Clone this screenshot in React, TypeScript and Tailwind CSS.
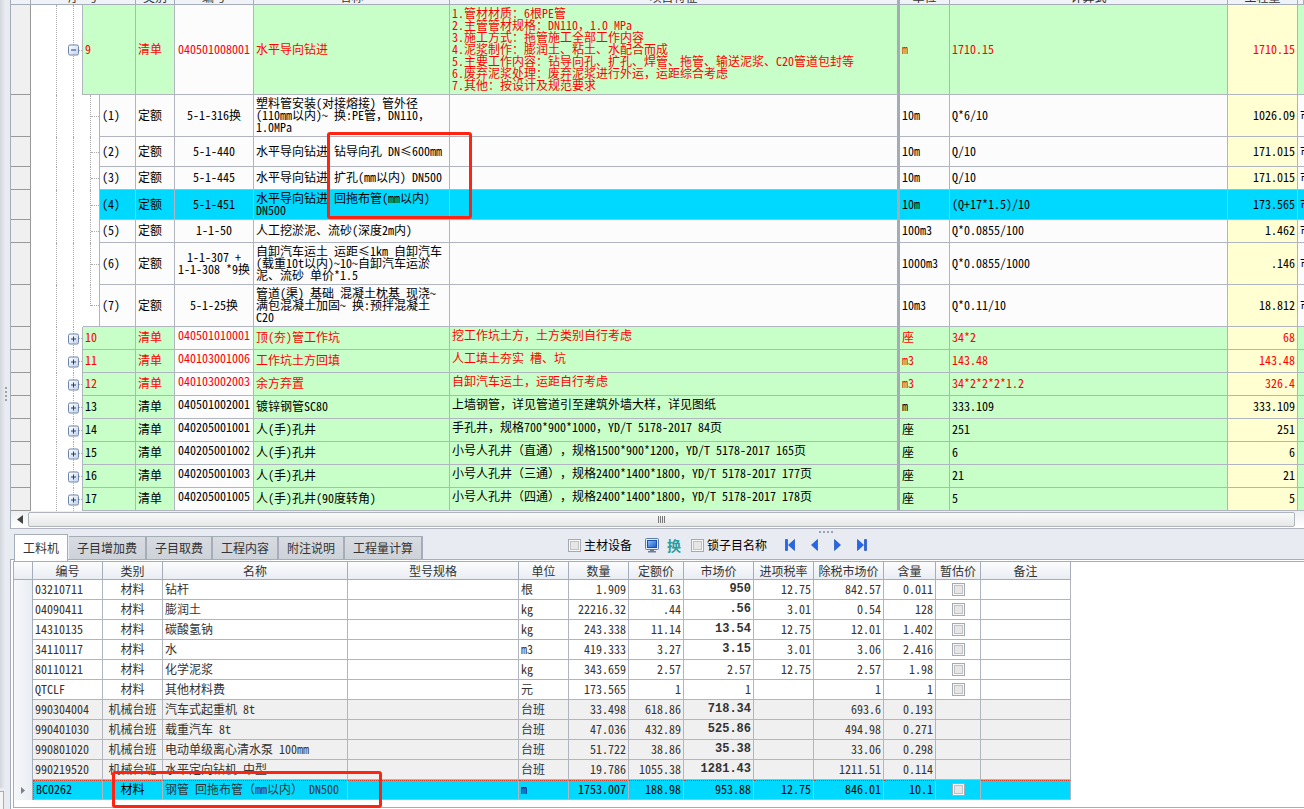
type Kind = "bill" | "quota";

type Item = {
  kind: Kind;
  seq: string;
  code: string;
  name: string;
  feature?: string;
  unit: string;
  formula: string;
  amount: string;
  height: string;
  red?: boolean;
  open?: boolean;
  selected?: boolean;
  last?: boolean;
};

const items: Item[] = [
  {
    kind: "bill",
    seq: "9",
    code: "040501008001",
    name: "水平导向钻进",
    feature:
      "1.管材材质：6根PE管\n2.主管管材规格：DN110，1.0 MPa\n3.施工方式：拖管施工全部工作内容\n4.泥浆制作：膨润土、粘土、水配合而成\n5.主要工作内容：钻导向孔、扩孔、焊管、拖管、输送泥浆、C20管道包封等\n6.废弃泥浆处理：废弃泥浆进行外运，运距综合考虑\n7.其他：按设计及规范要求",
    unit: "m",
    formula: "1710.15",
    amount: "1710.15",
    height: "h-[90px]",
    red: true,
    open: true,
  },
  { kind: "quota", seq: "(1)", code: "5-1-316换", name: "塑料管安装(对接熔接) 管外径\n(110mm以内)~ 换:PE管，DN110，\n1.0MPa", unit: "10m", formula: "Q*6/10", amount: "1026.09", height: "h-[42px]" },
  { kind: "quota", seq: "(2)", code: "5-1-440", name: "水平导向钻进 钻导向孔 DN≤600mm", unit: "10m", formula: "Q/10", amount: "171.015", height: "h-[30px]" },
  { kind: "quota", seq: "(3)", code: "5-1-445", name: "水平导向钻进 扩孔(mm以内) DN500", unit: "10m", formula: "Q/10", amount: "171.015", height: "h-[23px]" },
  { kind: "quota", seq: "(4)", code: "5-1-451", name: "水平导向钻进 回拖布管(mm以内)\nDN500", unit: "10m", formula: "(Q+17*1.5)/10", amount: "173.565", height: "h-[30px]", selected: true },
  { kind: "quota", seq: "(5)", code: "1-1-50", name: "人工挖淤泥、流砂(深度2m内)", unit: "100m3", formula: "Q*0.0855/100", amount: "1.462", height: "h-[23px]" },
  { kind: "quota", seq: "(6)", code: "1-1-307 +\n1-1-308 *9换", name: "自卸汽车运土 运距≤1km 自卸汽车\n(载重10t以内)~10~自卸汽车运淤\n泥、流砂 单价*1.5", unit: "1000m3", formula: "Q*0.0855/1000", amount: ".146", height: "h-[42px]" },
  { kind: "quota", seq: "(7)", code: "5-1-25换", name: "管道(渠) 基础 混凝土枕基 现浇~\n满包混凝土加固~ 换:预拌混凝土\nC20", unit: "10m3", formula: "Q*0.11/10", amount: "18.812", height: "h-[42px]", last: true },
  { kind: "bill", seq: "10", code: "040501010001", name: "顶(夯)管工作坑", feature: "挖工作坑土方，土方类别自行考虑", unit: "座", formula: "34*2", amount: "68", height: "h-[23px]", red: true },
  { kind: "bill", seq: "11", code: "040103001006", name: "工作坑土方回填", feature: "人工填土夯实 槽、坑", unit: "m3", formula: "143.48", amount: "143.48", height: "h-[23px]", red: true },
  { kind: "bill", seq: "12", code: "040103002003", name: "余方弃置", feature: "自卸汽车运土，运距自行考虑", unit: "m3", formula: "34*2*2*2*1.2", amount: "326.4", height: "h-[23px]", red: true },
  { kind: "bill", seq: "13", code: "040501002001", name: "镀锌钢管SC80", feature: "上墙钢管，详见管道引至建筑外墙大样，详见图纸", unit: "m", formula: "333.109", amount: "333.109", height: "h-[23px]" },
  { kind: "bill", seq: "14", code: "040205001001", name: "人(手)孔井", feature: "手孔井，规格700*900*1000，YD/T 5178-2017 84页", unit: "座", formula: "251", amount: "251", height: "h-[23px]" },
  { kind: "bill", seq: "15", code: "040205001002", name: "人(手)孔井", feature: "小号人孔井（直通），规格1500*900*1200，YD/T 5178-2017 165页", unit: "座", formula: "6", amount: "6", height: "h-[23px]" },
  { kind: "bill", seq: "16", code: "040205001003", name: "人(手)孔井", feature: "小号人孔井（三通），规格2400*1400*1800，YD/T 5178-2017 177页", unit: "座", formula: "21", amount: "21", height: "h-[23px]" },
  { kind: "bill", seq: "17", code: "040205001005", name: "人(手)孔井(90度转角)", feature: "小号人孔井（四通），规格2400*1400*1800，YD/T 5178-2017 178页", unit: "座", formula: "5", amount: "5", height: "h-[23px]" },
];

// code, category, name, unit, quantity, quota price, market price, tax rate, net price, content
const materials = [
  ["03210711", "材料", "钻杆", "根", "1.909", "31.63", "950", "12.75", "842.57", "0.011"],
  ["04090411", "材料", "膨润土", "kg", "22216.32", ".44", ".56", "3.01", "0.54", "128"],
  ["14310135", "材料", "碳酸氢钠", "kg", "243.338", "11.14", "13.54", "12.75", "12.01", "1.402"],
  ["34110117", "材料", "水", "m3", "419.333", "3.27", "3.15", "3.01", "3.06", "2.416"],
  ["80110121", "材料", "化学泥浆", "kg", "343.659", "2.57", "2.57", "12.75", "2.57", "1.98"],
  ["QTCLF", "材料", "其他材料费", "元", "173.565", "1", "1", "", "1", "1"],
  ["990304004", "机械台班", "汽车式起重机 8t", "台班", "33.498", "618.86", "718.34", "", "693.6", "0.193"],
  ["990401030", "机械台班", "载重汽车 8t", "台班", "47.036", "432.89", "525.86", "", "494.98", "0.271"],
  ["990801020", "机械台班", "电动单级离心清水泵 100mm", "台班", "51.722", "38.86", "35.38", "", "33.06", "0.298"],
  ["990219520", "机械台班", "水平定向钻机 中型", "台班", "19.786", "1055.38", "1281.43", "", "1211.51", "0.114"],
  ["BC0262", "材料", "钢管 回拖布管（mm以内） DN500", "m", "1753.007", "188.98", "953.88", "12.75", "846.01", "10.1"],
];

const materialColumns = [
  ["编号", "w-[70px]"],
  ["类别", "w-[60px]"],
  ["名称", "w-[185px]"],
  ["型号规格", "w-[171px]"],
  ["单位", "w-[50px]"],
  ["数量", "w-[60px]"],
  ["定额价", "w-[55px]"],
  ["市场价", "w-[70px]"],
  ["进项税率", "w-[60px]"],
  ["除税市场价", "w-[70px]"],
  ["含量", "w-[52px]"],
  ["暂估价", "w-[45px]"],
  ["备注", "w-[90px]"],
];

const tabs = ["工料机", "子目增加费", "子目取费", "工程内容", "附注说明", "工程量计算"];

const tick =
  "block size-[13px] shrink-0 appearance-none border border-[#a3aab6] bg-[#e6e6e6] shadow-[inset_0_0_0_1px_#f6f6f6,inset_0_0_0_2px_#c2c2c2]";

function Expander({ open }: { open?: boolean }) {
  return (
    <button
      type="button"
      aria-label={open ? "收起" : "展开"}
      className="absolute top-1/2 left-[-6px] size-[11px] -translate-y-1/2 rounded-[2px] border border-[#6b84a8] bg-linear-to-br from-white to-[#c3d3ee]"
    >
      <svg viewBox="0 0 9 9" className="block size-[9px]" stroke="#24406e" strokeWidth="1">
        <path d="M2 4.5h5" />
        {!open && <path d="M4.5 2v5" />}
      </svg>
    </button>
  );
}

function ItemRow({ item }: { item: Item }) {
  const bill = item.kind === "bill";
  const bg = item.selected ? "bg-[#00d9ff]" : bill ? "bg-[#c8ffc8]" : "bg-[#fcfcfc]";
  const plain = item.selected ? "bg-[#00d9ff]" : "bg-[#fcfcfc]";
  const cell = `border-r border-b border-[#b0b5c0] px-0.5 pb-0.5 ${bg}`;
  return (
    <tr className={`${item.height} ${item.red ? "text-[#ff0000]" : "text-black"}`}>
      <td className="border-r border-b border-[#999] bg-[#f0f0f0]" />
      <td className="border-r border-dotted border-[#aaa]" />
      <td className="border-r border-dotted border-[#aaa]" />
      {bill ? (
        <>
          <td className="relative border-r border-[#b0b5c0]">
            <div className="ml-1 border-t border-dotted border-[#aaa]" />
            <Expander open={item.open} />
          </td>
          <td colSpan={3} className={cell}>{item.seq}</td>
        </>
      ) : (
        <>
          <td />
          {item.last ? (
            <td className="border-b border-[#b0b5c0] align-top">
              <div className="h-[21px] border-r border-dotted border-[#aaa]" />
            </td>
          ) : (
            <td className="border-r border-dotted border-[#aaa]" />
          )}
          <td className={`border-r border-[#b0b5c0] ${item.last ? "border-b" : ""}`}>
            <div className="border-t border-dotted border-[#aaa]" />
          </td>
          <td className={cell}>{item.seq}</td>
        </>
      )}
      <td className={cell}>{bill ? "清单" : "定额"}</td>
      <td
        className={`border-r border-b border-[#b0b5c0] text-center ${plain} ${bill && !item.open ? "pt-0.5 align-top" : "pb-0.5"}`}
      >
        {item.code}
      </td>
      <td className={cell}>{item.name}</td>
      <td className={`border-r-[3px] border-b border-r-[#a3abb5] border-b-[#b0b5c0] px-0.5 ${bg} ${item.open ? "pb-0.5" : "pt-0.5 align-top"}`}>
        {item.feature}
      </td>
      <td className={cell}>{item.unit}</td>
      <td className={cell}>{item.formula}</td>
      <td className={`border-r border-b border-[#b0b5c0] px-0.5 pb-0.5 text-right ${item.selected ? "bg-[#00d9ff]" : "bg-[#ffffd2]"}`}>
        {item.amount}
      </td>
      <td className={`overflow-hidden border-b border-[#b0b5c0] pb-0.5 pl-0.5 ${bg}`}>{bill ? "" : "市"}</td>
    </tr>
  );
}

function HeadCell({ label, span, thick }: { label: string; span?: number; thick?: boolean }) {
  return (
    <th
      colSpan={span}
      className={`border-b border-[#a5adb8] bg-[#eff2f6] p-0 font-normal text-[#333] ${thick ? "border-r-[3px]" : "border-r"}`}
    >
      <div className="flex h-1 items-end justify-center overflow-hidden">
        <span className="pb-px">{label}</span>
      </div>
    </th>
  );
}

function ItemTable() {
  return (
    <table className="w-full table-fixed border-separate border-spacing-0 bg-white whitespace-pre">
      <colgroup>
        <col className="w-5" />
        <col className="w-[26px]" />
        <col className="w-[17px]" />
        <col className="w-[9px]" />
        <col className="w-2" />
        <col className="w-[9px]" />
        <col className="w-9" />
        <col className="w-[39px]" />
        <col className="w-[79px]" />
        <col className="w-[196px]" />
        <col />
        <col className="w-[50px]" />
        <col className="w-[278px]" />
        <col className="w-[70px]" />
        <col className="w-1.5" />
      </colgroup>
      <thead>
        <tr>
          <HeadCell label="" />
          <HeadCell label="序 号" span={6} />
          <HeadCell label="类别" />
          <HeadCell label="编号" />
          <HeadCell label="名称" />
          <HeadCell label="项目特征" thick />
          <HeadCell label="单位" />
          <HeadCell label="计算式" />
          <HeadCell label="工程量" />
          <HeadCell label="" />
        </tr>
      </thead>
      <tbody>
        {items.map((item) => (
          <ItemRow key={item.seq} item={item} />
        ))}
      </tbody>
    </table>
  );
}

function ScrollBar() {
  return (
    <div className="flex h-[18px] items-center border-b border-[#b0b5c0] bg-linear-to-b from-[#eceff2] to-white">
      <button type="button" aria-label="向左滚动" className="flex w-[17px] justify-center">
        <svg viewBox="0 0 6 9" className="h-[9px] w-1.5 fill-[#444]">
          <path d="M6 0v9L0 4.5z" />
        </svg>
      </button>
      <div className="mr-[9px] flex h-[15px] flex-1 items-center justify-center gap-px rounded-xs border border-[#b0b5bd] bg-linear-to-b from-[#fafafa] to-[#e6e7e7]">
        {[0, 1, 2, 3].map((i) => (
          <span key={i} className="h-[7px] w-px bg-[#777]" />
        ))}
      </div>
    </div>
  );
}

function Toolbar() {
  return (
    <div className="ml-[145px] flex h-[22px] items-center text-black">
      <label className="flex items-center gap-[3px]">
        <input type="checkbox" className={tick} />
        主材设备
      </label>
      <button type="button" aria-label="显示" className="ml-3">
        <svg viewBox="0 0 16 16" className="block size-4">
          <defs>
            <linearGradient id="screen" x1="0" y1="0" x2="1" y2="1">
              <stop offset="0" stopColor="#8cc4ff" />
              <stop offset="1" stopColor="#1457c8" />
            </linearGradient>
          </defs>
          <rect x="1.5" y="1.5" width="13" height="11" rx="1" fill="#e4edf8" stroke="#5c7cab" />
          <rect x="3.5" y="3.5" width="9" height="7" fill="url(#screen)" stroke="#1c4fa8" />
          <path d="M6 13h4v1h2v1.5H4V14h2z" fill="#6d7d96" />
        </svg>
      </button>
      <button type="button" className="ml-[7px] text-[14px] font-bold text-[#2a9c9e]">
        换
      </button>
      <label className="ml-[10px] flex items-center gap-[3px]">
        <input type="checkbox" className={tick} />
        锁子目名称
      </label>
      <div className="ml-[18px] flex items-center gap-4 fill-[#2368e8] stroke-[#1244b4]">
        <button type="button" aria-label="首条">
          <svg viewBox="0 0 10 12" className="block h-3 w-[10px]" strokeWidth="0.6">
            <path d="M0.5 0.5h2v11h-2zM9.5 0.5v11L3.5 6z" />
          </svg>
        </button>
        <button type="button" aria-label="上一条">
          <svg viewBox="0 0 7 12" className="block h-3 w-[7px]" strokeWidth="0.6">
            <path d="M6.5 0.5v11L0.5 6z" />
          </svg>
        </button>
        <button type="button" aria-label="下一条">
          <svg viewBox="0 0 7 12" className="block h-3 w-[7px]" strokeWidth="0.6">
            <path d="M0.5 0.5v11L6.5 6z" />
          </svg>
        </button>
        <button type="button" aria-label="末条">
          <svg viewBox="0 0 10 12" className="block h-3 w-[10px]" strokeWidth="0.6">
            <path d="M7.5 0.5h2v11h-2zM0.5 0.5v11L6.5 6z" />
          </svg>
        </button>
      </div>
    </div>
  );
}

function MaterialTable() {
  return (
    <table className="w-[1057px] table-fixed border-separate border-spacing-0 whitespace-pre text-[#333]">
      <thead>
        <tr className="h-[18px]">
          <th className="w-[19px] border-r border-b border-[#a5adb8] bg-linear-to-b from-[#fbfcfd] to-[#e9edf3]" />
          {materialColumns.map(([label, width]) => (
            <th
              key={label}
              className={`${width} border-r border-b border-[#a5adb8] bg-linear-to-b from-[#fbfcfd] to-[#e9edf3] p-0 font-normal`}
            >
              {label}
            </th>
          ))}
        </tr>
      </thead>
      <tbody>
        {materials.map(([code, type, name, unit, qty, quota, market, tax, net, content]) => {
          const selected = code === "BC0262";
          const machine = type === "机械台班";
          const cell = `border-r border-b border-[#b0b5c0] px-0.5 pb-0.5 ${selected ? "border-t border-t-[#d8402a] [border-top-style:dotted]" : ""}`;
          const changed = market !== quota && !selected;
          return (
            <tr
              key={code}
              className={`h-5 ${selected ? "bg-[#00d9ff] text-black" : machine ? "bg-[#f0f0f0]" : "bg-white"}`}
            >
              <td className="border-r border-[#a5adb8] bg-linear-to-r from-[#f6f7fa] to-[#e9edf3] p-0">
                {selected && (
                  <svg viewBox="0 0 4 7" className="mx-auto h-[7px] w-1 fill-[#7c828c]">
                    <path d="M0 0l4 3.5L0 7z" />
                  </svg>
                )}
              </td>
              <td className={`${cell} ${selected ? "border-l border-l-[#d8402a] [border-left-style:dotted]" : ""}`}>{code}</td>
              <td className={`${cell} text-center`}>{type}</td>
              <td className={`${cell} text-[#333]`}>{name}</td>
              <td className={cell} />
              <td className={cell}>{unit}</td>
              <td className={`${cell} text-right`}>{qty}</td>
              <td className={`${cell} text-right`}>{quota}</td>
              <td className={`${cell} text-right ${changed ? 'font-["Liberation_Mono",monospace] font-bold' : ""}`}>
                {market}
              </td>
              <td className={`${cell} text-right`}>{tax}</td>
              <td className={`${cell} text-right`}>{net}</td>
              <td className={`${cell} text-right`}>{content}</td>
              <td className="border-r border-b border-[#b0b5c0] p-0">
                {!machine && <input type="checkbox" aria-label={`暂估价 ${code}`} className={`${tick} mx-auto`} />}
              </td>
              <td className={cell} />
            </tr>
          );
        })}
      </tbody>
    </table>
  );
}

export default function App() {
  return (
    <div className='relative flex min-h-screen overflow-hidden bg-[#e8ebf1] font-["Noto_Sans_Mono_CJK_SC","Noto_Sans_CJK_SC",monospace] text-[12px] leading-3 [text-spacing-trim:space-all]'>
      <aside className="flex w-[10px] shrink-0 flex-col">
        <div className="flex flex-1 flex-col items-end justify-center gap-0.5 bg-linear-to-r from-[#d2d7dc] to-[#e8ebf1] to-50% pr-[3px]">
          {[0, 1, 2, 3].map((i) => (
            <span key={i} className="size-0.5 bg-[#9aa3b0]" />
          ))}
        </div>
        <div className="mt-[3px] h-[18px] w-1 border-t border-r border-[#a5adb8] bg-[#f5f5f5]" />
      </aside>

      <main className="flex min-w-0 flex-1 flex-col">
        <section className="border-l border-[#a5adb8]">
          <ItemTable />
          <ScrollBar />
        </section>

        <div className="flex h-[5px] items-center gap-0.5 pl-[62.5%]">
          {[0, 1, 2, 3].map((i) => (
            <span key={i} className="size-0.5 bg-[#9aa3b0]" />
          ))}
        </div>

        <div className="flex items-start">
          <div role="tablist" className="z-10 -mb-0.5 ml-1 flex items-end text-[#333]">
            {tabs.map((tab, i) => (
              <button
                key={tab}
                type="button"
                role="tab"
                aria-selected={i === 0}
                className={
                  i === 0
                    ? "mr-px h-[27px] border-t border-r border-l border-[#a5adb8] bg-white px-2"
                    : "mb-0.5 h-[23px] border-t border-r-2 border-[#a5adb8] bg-linear-to-b from-[#d8dce1] to-[#cdd2d9] px-2"
                }
              >
                {tab}
              </button>
            ))}
          </div>
          <Toolbar />
        </div>

        <section className="flex-1 border-t border-l border-[#a5adb8] bg-white pt-px pl-0.5">
          <div className="border-t border-b border-l border-[#a5adb8] pb-[7px]">
            <MaterialTable />
          </div>
        </section>
      </main>

      <div className="pointer-events-none absolute top-[132px] left-[327px] h-[87px] w-[145px] rounded-[3px] border-[3px] border-[#ff2412]" />
      <div className="pointer-events-none absolute top-[771px] left-[112px] h-[37px] w-[270px] rounded-[3px] border-[3px] border-[#ff2412]" />
    </div>
  );
}
